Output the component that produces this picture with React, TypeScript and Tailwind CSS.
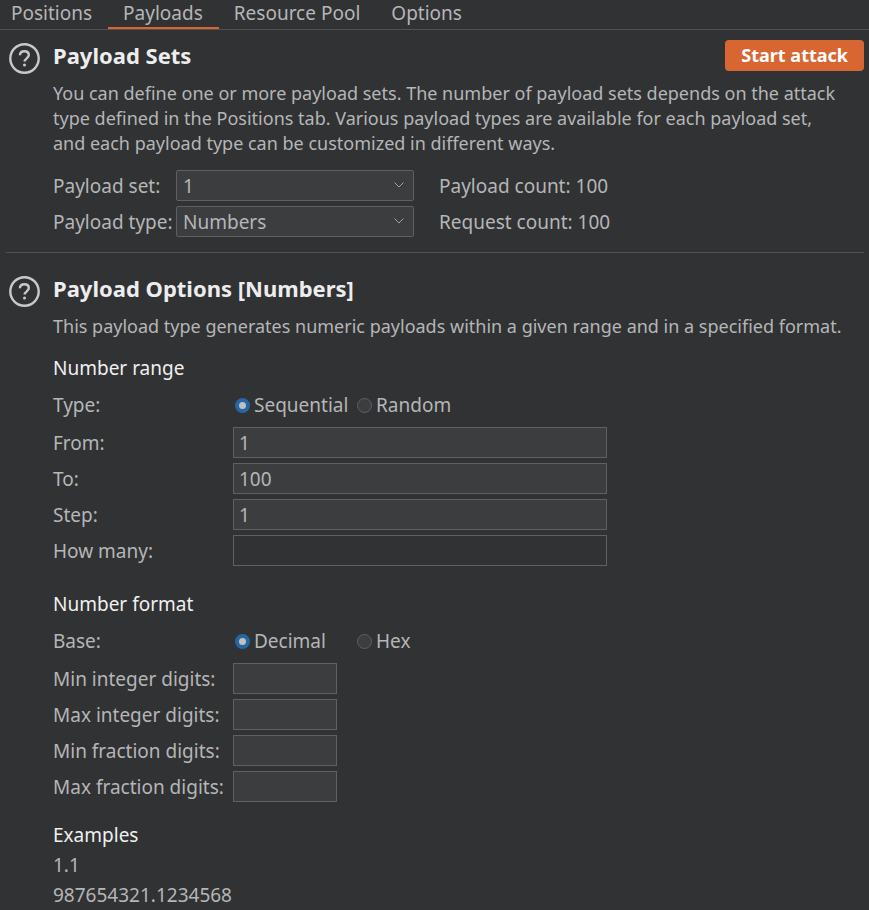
import { useState } from "react";
import type { ReactNode } from "react";

const tabs = ["Positions", "Payloads", "Resource Pool", "Options"];

function HelpButton() {
  return (
    <button type="button" aria-label="Help" className="mt-[3px] size-[31px] shrink-0">
      <svg viewBox="0 0 31 31" className="size-[31px]" fill="none" stroke="#c8c9ca">
        <circle cx="15.5" cy="15.5" r="14.2" strokeWidth="2.4" />
        <path d="M10.900 12.200C11 9.500 13 8.200 15.400 8.200c2.500 0 4.400 1.500 4.400 3.900 0 3.300-4.100 3.200-4.100 6.500" strokeWidth="2.4" />
        <circle cx="15.500" cy="22.100" r="1.500" fill="#c8c9ca" stroke="none" />
      </svg>
    </button>
  );
}

function Section({ title, action, children }: { title: string; action?: ReactNode; children: ReactNode }) {
  return (
    <section className="flex gap-[13px] pl-[9px]">
      <HelpButton />
      <div className="min-w-0 flex-1">
        <div className="flex items-center justify-between pr-[5px]">
          <h2 className="text-[22px] leading-[31px] font-bold text-[#ededed]">{title}</h2>
          {action}
        </div>
        {children}
      </div>
    </section>
  );
}

function SelectField({ id, value }: { id: string; value: string }) {
  return (
    <div className="relative">
      <select
        id={id}
        defaultValue={value}
        className="h-[31px] w-full appearance-none rounded-[2px] border border-[#5e6062] bg-[#3c3d3f] px-[6px] pt-[2px] leading-[27px]"
      >
        <option>{value}</option>
      </select>
      <svg viewBox="0 0 12 8" className="pointer-events-none absolute top-[11px] right-[9px] h-2 w-3" fill="none" stroke="#9fa1a3">
        <path d="M1.500 1.500l4.500 4.500 4.500-4.500" />
      </svg>
    </div>
  );
}

function Row({ id, label, children }: { id: string; label: string; children: ReactNode }) {
  return (
    <div className="grid grid-cols-[180px_1fr] items-center">
      <label htmlFor={id} className="pt-[2px]">{label}</label>
      {children}
    </div>
  );
}

function TextRow({ id, label, value = "", small, disabled }: { id: string; label: string; value?: string; small?: boolean; disabled?: boolean }) {
  return (
    <Row id={id} label={label}>
      <input
        id={id}
        type="text"
        defaultValue={value}
        disabled={disabled}
        className={`h-[31px] border border-[#5e6062] px-[5px] ${small ? "w-[104px]" : "w-full max-w-[374px]"} ${disabled ? "bg-[#313234]" : "bg-[#3c3d3f]"}`}
      />
    </Row>
  );
}

function RadioRow({ name, label, options }: { name: string; label: string; options: string[] }) {
  return (
    <div role="radiogroup" aria-label={label} className="mt-[10px] mb-2 grid grid-cols-[182px_122px_1fr] items-center leading-[28px]">
      <span>{label}</span>
      {options.map((option, i) => (
        <label key={option} className="flex items-center gap-1">
          <input
            type="radio"
            name={name}
            defaultChecked={i === 0}
            className="size-[15px] shrink-0 appearance-none rounded-full border border-[#5e6062] bg-[#3c3d3f] checked:border-4 checked:border-[#2666a3] checked:bg-[#c0c0c0]"
          />
          {option}
        </label>
      ))}
    </div>
  );
}

export default function App() {
  const [active, setActive] = useState("Payloads");
  return (
    <main className="min-h-screen bg-[#313234] font-['Noto_Sans',sans-serif] text-[19px] leading-[25px] text-[#b5b6b7]">
      <nav className="flex h-[30px] border-b border-[#505254]">
        {tabs.map((tab) => (
          <button
            key={tab}
            type="button"
            onClick={() => setActive(tab)}
            className={`-mb-px h-[29px] border-b-2 pr-4 pl-[15px] whitespace-nowrap first:pl-[11px] ${active === tab ? "border-[#d86633]" : "border-transparent"}`}
          >
            {tab}
          </button>
        ))}
      </nav>

      <div className="pt-[10px]">
        <Section
          title="Payload Sets"
          action={
            <button type="button" className="h-[31px] rounded-[4px] bg-[#d86633] px-4 text-[18px] font-bold whitespace-nowrap text-white">
              Start attack
            </button>
          }
        >
          <p className="mt-[10px] pr-6 text-[18px]">
            You can define one or more payload sets. The number of payload sets depends on the attack type defined in the
            Positions tab. Various payload types are available for each payload set, and each payload type can be customized
            in different ways.
          </p>
          <div className="mt-[14px] grid grid-cols-[123px_238px_1fr] items-center gap-y-[5px]">
            <label htmlFor="set" className="pt-[2px] whitespace-nowrap">Payload set:</label>
            <SelectField id="set" value="1" />
            <span className="pt-[2px] pl-[25px]">Payload count: 100</span>
            <label htmlFor="type" className="pt-[2px] whitespace-nowrap">Payload type:</label>
            <SelectField id="type" value="Numbers" />
            <span className="pt-[2px] pl-[25px]">Request count: 100</span>
          </div>
        </Section>
      </div>

      <hr className="mt-[15px] mr-[5px] mb-5 ml-[6px] border-[#505254]" />

      <Section title="Payload Options [Numbers]">
        <p className="mt-[10px] text-[18px]">This payload type generates numeric payloads within a given range and in a specified format.</p>

        <h3 className="mt-[17px] text-[#f0f0f0]">Number range</h3>
        <RadioRow name="order" label="Type:" options={["Sequential", "Random"]} />
        <div className="flex flex-col gap-[5px]">
          <TextRow id="from" label="From:" value="1" />
          <TextRow id="to" label="To:" value="100" />
          <TextRow id="step" label="Step:" value="1" />
          <TextRow id="many" label="How many:" disabled />
        </div>

        <h3 className="mt-[26px] text-[#f0f0f0]">Number format</h3>
        <RadioRow name="base" label="Base:" options={["Decimal", "Hex"]} />
        <div className="flex flex-col gap-[5px]">
          <TextRow id="min-int" label="Min integer digits:" small />
          <TextRow id="max-int" label="Max integer digits:" small />
          <TextRow id="min-frac" label="Min fraction digits:" small />
          <TextRow id="max-frac" label="Max fraction digits:" small />
        </div>

        <h3 className="mt-[21px] text-[#f0f0f0]">Examples</h3>
        <p className="mt-[5px]">1.1</p>
        <p className="mt-[5px]">987654321.1234568</p>
      </Section>
    </main>
  );
}
